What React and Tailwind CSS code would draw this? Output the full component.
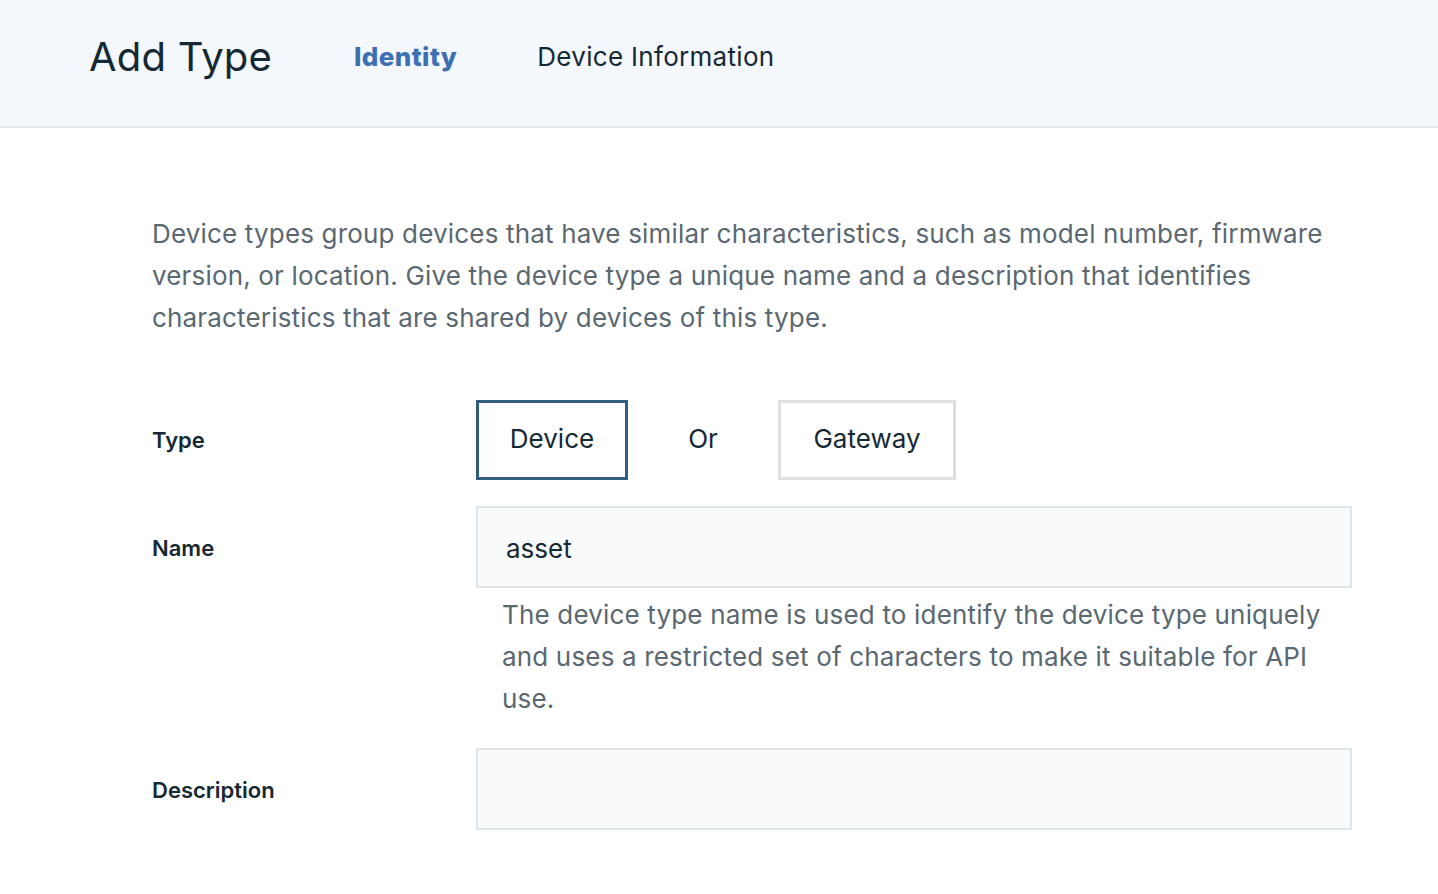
export default function App() {
  const font = { fontFamily: 'Inter, "Noto Sans", sans-serif' };
  return (
    <div className="min-h-[894px] bg-white text-[#152935]" style={font}>
      <header className="flex h-[128px] items-center border-b-2 border-[#e0e7ec] bg-[#f4f7fb] pb-[12px] pl-[89px]">
        <h1 className="text-[40px] font-normal leading-none tracking-[0.2px] text-[#152935]">Add Type</h1>
        <nav className="ml-[82px] flex items-center gap-[80px]">
          <span className="text-[26px] font-extrabold leading-none tracking-[0.4px] text-[#3d70b2]">Identity</span>
          <span className="text-[26px] font-normal leading-none tracking-[0.3px] text-[#152935]">Device Information</span>
        </nav>
      </header>

      <main className="box-content w-[1200px] pl-[152px]">
        <p className="mt-[85px] text-[26px] leading-[42px] tracking-[0.17px] text-[#5a6872]">
          Device types group devices that have similar characteristics, such as model number, firmware version, or location. Give the device type a unique name and a description that identifies characteristics that are shared by devices of this type.
        </p>

        <div className="mt-[61px] flex items-center">
          <div className="w-[324px] text-[22px] font-semibold text-[#152935]">Type</div>
          <div className="flex items-center">
            <button className="flex h-[80px] w-[152px] items-center justify-center border-[3px] border-[#325c80] bg-white pb-[4px] text-[26px] text-[#152935]">Device</button>
            <span className="flex w-[150px] justify-center pb-[4px] text-[26px] text-[#152935]">Or</span>
            <button className="flex h-[80px] w-[178px] items-center justify-center border-[3px] border-[#e0e0e0] bg-white pb-[4px] text-[26px] text-[#152935]">Gateway</button>
          </div>
        </div>

        <div className="mt-[26px] flex items-start">
          <div className="flex h-[82px] w-[324px] items-center pt-[2px] text-[22px] font-semibold text-[#152935]">Name</div>
          <div className="flex-1">
            <div className="flex h-[82px] items-center border-2 border-[#dfe6eb] bg-[#f9fbfb] pl-[28px] pt-[3px] text-[26px] text-[#152935]">asset</div>
            <p className="mt-[6px] pl-[26px] pr-[20px] text-[26px] leading-[42px] tracking-[0.17px] text-[#5a6872]">
              The device type name is used to identify the device type uniquely and uses a restricted set of characters to make it suitable for API use.
            </p>
          </div>
        </div>

        <div className="mt-[28px] flex items-start">
          <div className="flex h-[82px] w-[324px] items-center pt-[2px] text-[22px] font-semibold text-[#152935]">Description</div>
          <div className="flex-1">
            <div className="h-[82px] border-2 border-[#dfe6eb] bg-[#f9fbfb]" />
          </div>
        </div>
      </main>
    </div>
  );
}
